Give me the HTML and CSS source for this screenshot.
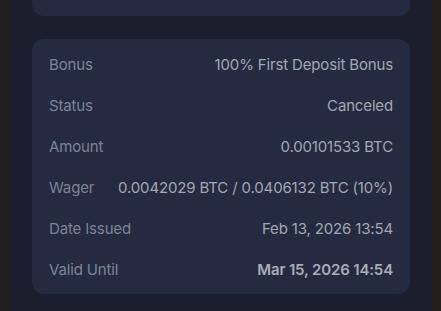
FILE: index.html
```html
<!DOCTYPE html>
<html lang="en">
<head>
  <meta charset="UTF-8" />
  <meta name="viewport" content="width=device-width, initial-scale=1" />
  <title>Bonus Details</title>
  <link rel="stylesheet" href="styles.css">
</head>
<body>
  <div class="frame">
    <div class="side"></div>
    <main class="panel">
      <section class="card card-top">
        <div class="row">
          <span class="label">Wagering</span>
          <span class="value">Details</span>
        </div>
      </section>

      <section class="card">
        <div class="row">
          <span class="label">Bonus</span>
          <span class="value">100% First Deposit Bonus</span>
        </div>
        <div class="row">
          <span class="label">Status</span>
          <span class="value">Canceled</span>
        </div>
        <div class="row">
          <span class="label">Amount</span>
          <span class="value">0.00101533 BTC</span>
        </div>
        <div class="row">
          <span class="label">Wager</span>
          <span class="value">0.0042029 BTC / 0.0406132 BTC (10%)</span>
        </div>
        <div class="row">
          <span class="label">Date Issued</span>
          <span class="value">Feb 13, 2026 13:54</span>
        </div>
        <div class="row">
          <span class="label">Valid Until</span>
          <span class="value strong">Mar 15, 2026 14:54</span>
        </div>
      </section>
    </main>
    <div class="side side-right"></div>
  </div>
</body>
</html>
```

FILE: styles.css
```css
/* Reset básico */
* {
  box-sizing: border-box;
  margin: 0;
  padding: 0;
  font-family: Inter, 'Noto Sans', sans-serif;
}

body {
  height: 100vh;
  background: #221f1f;
  overflow: hidden;
}

.frame {
  display: flex;
  height: 100%;
}

.side {
  width: 10px;
  flex-shrink: 0;
  background: #221f1e;
}

.side-right {
  width: 9px;
}

.panel {
  flex: 1;
  background: #1b1f2d;
  padding: 0 22px;
  display: flex;
  flex-direction: column;
  gap: 23px;
}

.card {
  background: #242a3f;
  border-radius: 12px;
  padding: 5px 17px 4px;
}

/* tarjeta superior, cortada por el borde */
.card-top {
  margin-top: -44px;
  height: 60px;
  overflow: hidden;
}

.card-top .row {
  visibility: hidden;
}

.row {
  height: 41px;
  display: flex;
  align-items: center;
  justify-content: space-between;
  font-size: 15px;
  letter-spacing: -0.15px;
}

.label {
  color: #7e8498;
}

.value {
  color: #a2a7b4;
}

.value.strong {
  font-weight: 600;
  color: #a9adb9;
}
```
